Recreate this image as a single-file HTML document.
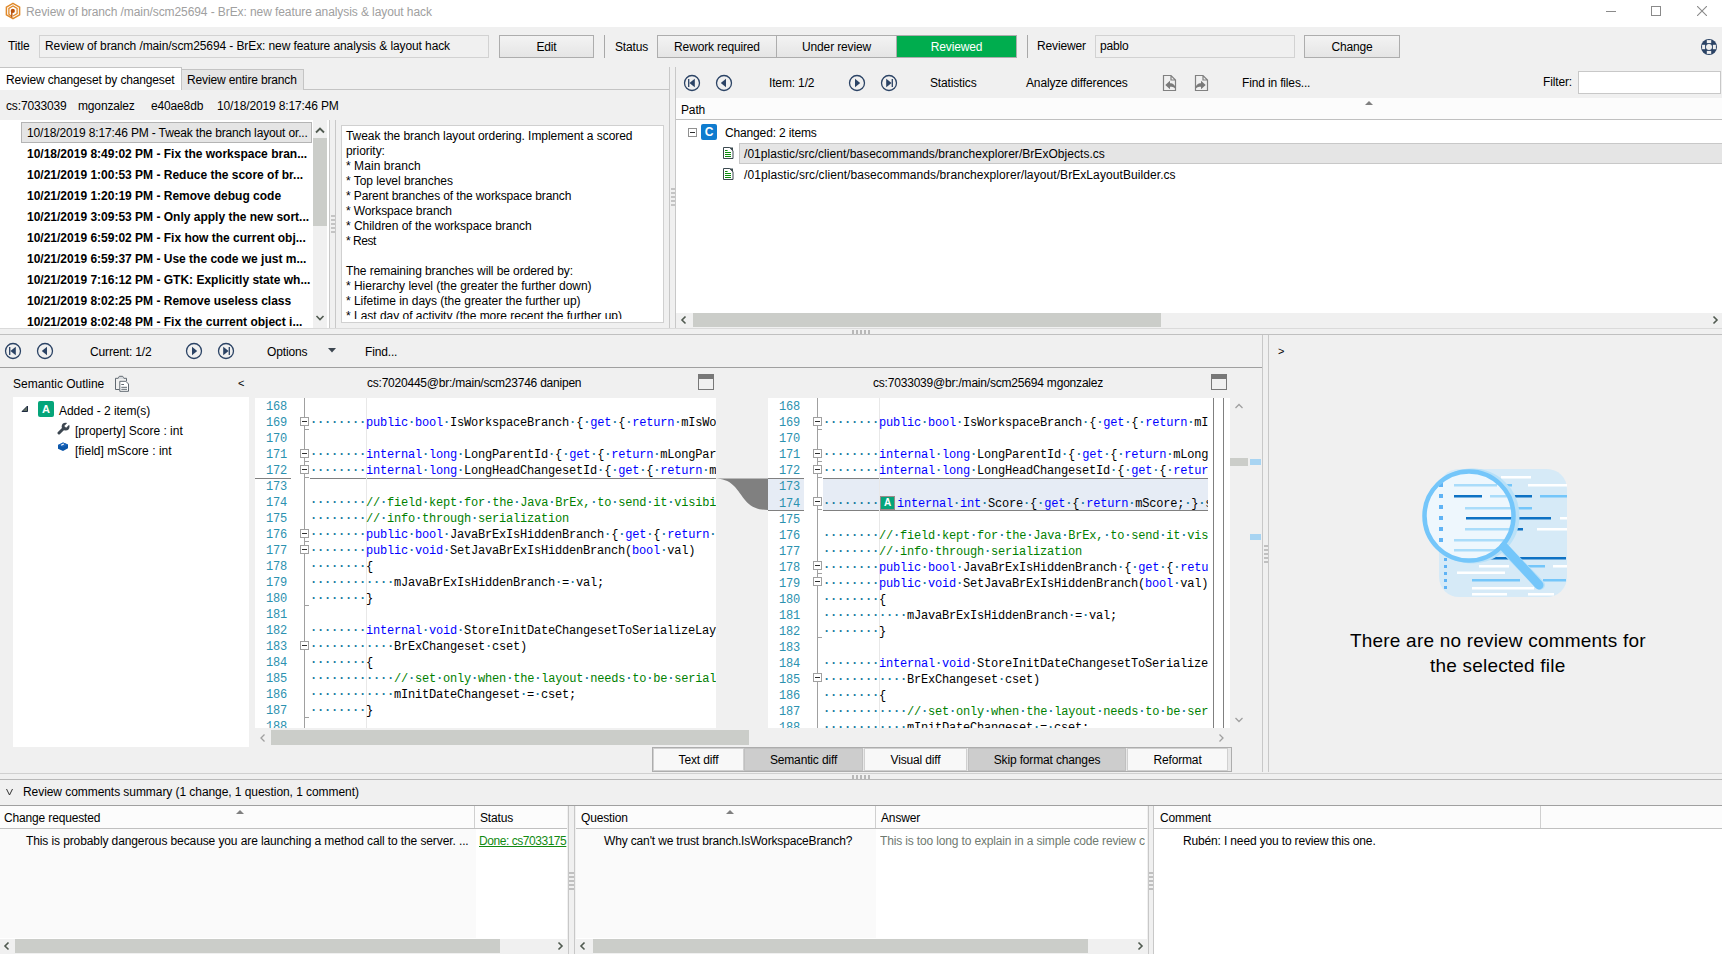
<!DOCTYPE html><html><head><meta charset="utf-8"><style>
*{box-sizing:border-box;margin:0;padding:0}
html,body{width:1722px;height:954px;overflow:hidden;background:#f0f0f0;font-family:"Liberation Sans",sans-serif;font-size:12px;color:#000}
.a{position:absolute}
.t{position:absolute;white-space:nowrap;line-height:14px;letter-spacing:-0.15px}
.btn{position:absolute;padding-top:1px;border:1px solid #adadad;background:linear-gradient(#f3f3f3,#e5e5e5);text-align:center;white-space:nowrap;letter-spacing:-0.15px}
.code{position:absolute;white-space:pre;font-family:"Liberation Mono",monospace;font-size:12px;letter-spacing:-0.2px;line-height:16px;color:#000}
.k{color:#0000ff}.c{color:#008000}.d{color:#17799f;font-weight:bold}
.ln{position:absolute;font-family:"Liberation Mono",monospace;font-size:12px;letter-spacing:-0.2px;line-height:16px;color:#2b91af;text-align:right;width:40px}
</style></head><body>
<div class="a" style="left:0px;top:0px;width:1722px;height:27px;background:#fff"></div>
<svg class="a" style="left:0;top:0" width="30" height="24" viewBox="0 0 30 24">
 <path d="M13 3.4 L19.6 7.2 L19.6 14.8 L13 18.6 L6.4 14.8 L6.4 7.2 Z" fill="none" stroke="#e0892a" stroke-width="1.5"/>
 <path d="M11.2 16.2 L8.9 14.2 L8.9 8.4 L13 6 L17.1 8.4 L17.1 13.6 L13 16" fill="none" stroke="#e0892a" stroke-width="1.3"/>
 <circle cx="12.8" cy="10.9" r="2.1" fill="#b8500a"/>
 <path d="M11.8 12 L11.8 17.5" stroke="#b8500a" stroke-width="1.4"/></svg>
<div class="t" style="left:26px;top:5px;color:#a0a0a0;letter-spacing:-0.086px">Review of branch /main/scm25694 - BrEx: new feature analysis &amp; layout hack</div>
<div class="a" style="left:1606px;top:11px;width:10px;height:1px;background:#8a8a8a"></div>
<div class="a" style="left:1651px;top:6px;width:10px;height:10px;border:1px solid #8a8a8a"></div>
<svg class="a" style="left:1697px;top:6px" width="10" height="10"><path d="M0 0 L10 10 M10 0 L0 10" stroke="#8a8a8a" stroke-width="1.1"/></svg>
<div class="t" style="left:8px;top:39px;">Title</div>
<div class="a" style="left:39px;top:35px;width:450px;height:23px;border:1px solid #d2d2d2;background:#f0f0f0"></div>
<div class="t" style="left:45px;top:39px;;letter-spacing:-0.097px">Review of branch /main/scm25694 - BrEx: new feature analysis &amp; layout hack</div>
<div class="btn" style="left:499px;top:35px;width:95px;height:23px;line-height:21px;">Edit</div>
<div class="a" style="left:604px;top:35px;width:1px;height:23px;background:#a8a8a8"></div>
<div class="t" style="left:615px;top:40px;">Status</div>
<div class="btn" style="left:657px;top:35px;width:120px;height:23px;line-height:21px;">Rework required</div>
<div class="btn" style="left:776px;top:35px;width:121px;height:23px;line-height:21px;">Under review</div>
<div class="btn" style="left:896px;top:35px;width:121px;height:23px;line-height:21px;background:#00ad4e;color:#fff">Reviewed</div>
<div class="a" style="left:1027px;top:35px;width:1px;height:23px;background:#a8a8a8"></div>
<div class="t" style="left:1037px;top:39px;">Reviewer</div>
<div class="a" style="left:1095px;top:35px;width:200px;height:23px;border:1px solid #d2d2d2;background:#f0f0f0"></div>
<div class="t" style="left:1100px;top:39px;">pablo</div>
<div class="btn" style="left:1304px;top:35px;width:96px;height:23px;line-height:21px;">Change</div>
<svg class="a" style="left:1701px;top:39px" width="16" height="16" viewBox="-8 -8 16 16">
 <circle r="8" fill="#2b4365"/><circle r="3" fill="#f0f0f0"/>
 <rect x="-2.2" y="-6.9" width="4.4" height="3" fill="#f0f0f0"/><rect x="-2.2" y="3.9" width="4.4" height="3" fill="#f0f0f0"/>
 <rect x="-6.9" y="-2.2" width="3" height="4.4" fill="#f0f0f0"/><rect x="3.9" y="-2.2" width="3" height="4.4" fill="#f0f0f0"/></svg>
<div class="a" style="left:0px;top:89px;width:669px;height:1px;background:#c4c4c4"></div>
<div class="a" style="left:-1px;top:67px;width:183px;height:23px;background:#fff;border:1px solid #c4c4c4;border-bottom:none"></div>
<div class="t" style="left:6px;top:73px;">Review changeset by changeset</div>
<div class="a" style="left:182px;top:69px;width:122px;height:21px;background:#e5e5e5;border:1px solid #c4c4c4;border-bottom:none;border-left:none"></div>
<div class="t" style="left:187px;top:73px;">Review entire branch</div>
<div class="t" style="left:6px;top:99px;">cs:7033039</div>
<div class="t" style="left:78px;top:99px;">mgonzalez</div>
<div class="t" style="left:151px;top:99px;">e40ae8db</div>
<div class="t" style="left:217px;top:99px;">10/18/2019 8:17:46 PM</div>
<div class="a" style="left:0px;top:120px;width:329px;height:208px;background:#fff"></div>
<div class="a" style="left:21px;top:122px;width:291px;height:21px;background:#e5e5e5;border:1px solid #b4b4b4"></div>
<div class="a" style="left:0;top:120px;width:313px;height:208px;overflow:hidden">
<div class="t" style="left:27px;top:6px;">10/18/2019 8:17:46 PM - Tweak the branch layout or...</div>
<div class="t" style="left:27px;top:27px;font-weight:bold;letter-spacing:0px;">10/18/2019 8:49:02 PM - Fix the workspace bran...</div>
<div class="t" style="left:27px;top:48px;font-weight:bold;letter-spacing:0px;">10/21/2019 1:00:53 PM - Reduce the score of br...</div>
<div class="t" style="left:27px;top:69px;font-weight:bold;letter-spacing:0px;">10/21/2019 1:20:19 PM - Remove debug code</div>
<div class="t" style="left:27px;top:90px;font-weight:bold;letter-spacing:0px;">10/21/2019 3:09:53 PM - Only apply the new sort...</div>
<div class="t" style="left:27px;top:111px;font-weight:bold;letter-spacing:0px;">10/21/2019 6:59:02 PM - Fix how the current obj...</div>
<div class="t" style="left:27px;top:132px;font-weight:bold;letter-spacing:0px;">10/21/2019 6:59:37 PM - Use the code we just m...</div>
<div class="t" style="left:27px;top:153px;font-weight:bold;letter-spacing:0px;">10/21/2019 7:16:12 PM - GTK: Explicitly state wh...</div>
<div class="t" style="left:27px;top:174px;font-weight:bold;letter-spacing:0px;">10/21/2019 8:02:25 PM - Remove useless class</div>
<div class="t" style="left:27px;top:195px;font-weight:bold;letter-spacing:0px;">10/21/2019 8:02:48 PM - Fix the current object i...</div>
</div>
<div class="a" style="left:313px;top:120px;width:14px;height:208px;background:#f0f0f0"></div>
<div class="a" style="left:313px;top:138px;width:14px;height:88px;background:#cbcdc9"></div>
<svg class="a" style="left:315px;top:126px" width="10" height="8"><path d="M1 6.5 L5 2.5 L9 6.5" fill="none" stroke="#505a50" stroke-width="1.8"/></svg>
<svg class="a" style="left:315px;top:314px" width="10" height="8"><path d="M1.5 2 L5 5.5 L8.5 2" fill="none" stroke="#505a50" stroke-width="1.6"/></svg>
<div class="a" style="left:329px;top:120px;width:1px;height:208px;background:#c8c8c8"></div>
<div class="a" style="left:335px;top:120px;width:1px;height:208px;background:#c8c8c8"></div>
<div class="a" style="left:331px;top:215px;width:4px;height:2px;background:#c4c4c4"></div>
<div class="a" style="left:331px;top:219px;width:4px;height:2px;background:#c4c4c4"></div>
<div class="a" style="left:331px;top:223px;width:4px;height:2px;background:#c4c4c4"></div>
<div class="a" style="left:331px;top:227px;width:4px;height:2px;background:#c4c4c4"></div>
<div class="a" style="left:331px;top:231px;width:4px;height:2px;background:#c4c4c4"></div>
<div class="a" style="left:341px;top:125px;width:323px;height:198px;background:#fff;border:1px solid #d0d0d0"></div>
<div class="a" style="left:342px;top:126px;width:321px;height:193px;overflow:hidden">
<div class="t" style="left:4px;top:3px;;letter-spacing:-0.059px">Tweak the branch layout ordering. Implement a scored</div>
<div class="t" style="left:4px;top:18px;letter-spacing:-0.05px">priority:</div>
<div class="t" style="left:4px;top:33px;;letter-spacing:0.059px">* Main branch</div>
<div class="t" style="left:4px;top:48px;letter-spacing:-0.05px">* Top level branches</div>
<div class="t" style="left:4px;top:63px;;letter-spacing:-0.118px">* Parent branches of the workspace branch</div>
<div class="t" style="left:4px;top:78px;;letter-spacing:-0.107px">* Workspace branch</div>
<div class="t" style="left:4px;top:93px;;letter-spacing:-0.031px">* Children of the workspace branch</div>
<div class="t" style="left:4px;top:108px;;letter-spacing:-0.480px">* Rest</div>
<div class="t" style="left:4px;top:123px;letter-spacing:-0.05px"></div>
<div class="t" style="left:4px;top:138px;;letter-spacing:-0.074px">The remaining branches will be ordered by:</div>
<div class="t" style="left:4px;top:153px;;letter-spacing:-0.025px">* Hierarchy level (the greater the further down)</div>
<div class="t" style="left:4px;top:168px;;letter-spacing:-0.020px">* Lifetime in days (the greater the further up)</div>
<div class="t" style="left:4px;top:183px;;letter-spacing:-0.015px">* Last day of activity (the more recent the further up)</div>
</div>
<div class="a" style="left:669px;top:67px;width:1px;height:261px;background:#c8c8c8"></div>
<div class="a" style="left:675px;top:67px;width:1px;height:261px;background:#c8c8c8"></div>
<div class="a" style="left:671px;top:188px;width:4px;height:2px;background:#c4c4c4"></div>
<div class="a" style="left:671px;top:192px;width:4px;height:2px;background:#c4c4c4"></div>
<div class="a" style="left:671px;top:196px;width:4px;height:2px;background:#c4c4c4"></div>
<div class="a" style="left:671px;top:200px;width:4px;height:2px;background:#c4c4c4"></div>
<div class="a" style="left:671px;top:204px;width:4px;height:2px;background:#c4c4c4"></div>
<svg class="a" style="left:683px;top:74px" width="18" height="18" viewBox="-9 -9 18 18"><circle r="7.5" fill="none" stroke="#2b4365" stroke-width="1.3"/><path d="M-3.3 -4 L-3.3 4" stroke="#2b4365" stroke-width="1.3"/><path d="M2.8 -4.2 L-2.6 0 L2.8 4.2 Z" fill="#2b4365"/></svg>
<svg class="a" style="left:715px;top:74px" width="18" height="18" viewBox="-9 -9 18 18"><circle r="7.5" fill="none" stroke="#2b4365" stroke-width="1.3"/><path d="M2 -4.2 L-3.2 0 L2 4.2 Z" fill="#2b4365"/></svg>
<div class="t" style="left:769px;top:76px;">Item: 1/2</div>
<svg class="a" style="left:848px;top:74px" width="18" height="18" viewBox="-9 -9 18 18"><circle r="7.5" fill="none" stroke="#2b4365" stroke-width="1.3"/><path d="M-2 -4.2 L3.2 0 L-2 4.2 Z" fill="#2b4365"/></svg>
<svg class="a" style="left:880px;top:74px" width="18" height="18" viewBox="-9 -9 18 18"><circle r="7.5" fill="none" stroke="#2b4365" stroke-width="1.3"/><path d="M3.3 -4 L3.3 4" stroke="#2b4365" stroke-width="1.3"/><path d="M-2.8 -4.2 L2.6 0 L-2.8 4.2 Z" fill="#2b4365"/></svg>
<div class="t" style="left:930px;top:76px;">Statistics</div>
<div class="t" style="left:1026px;top:76px;">Analyze differences</div>
<svg class="a" style="left:1162px;top:74px" width="16" height="18" viewBox="0 0 16 18">
<path d="M1.5 1.5 H9 L13.5 6 V16.5 H1.5 Z M9 1.5 V6 H13.5" fill="none" stroke="#808080" stroke-width="1.2"/>
<path d="M3.3 11 L8 6.8 V9.2 C11 9.2 13.6 11 13.6 15.2 C12.6 13.3 10.6 12.8 8 12.8 V15.2 Z" fill="#7a7a7a"/></svg>
<svg class="a" style="left:1194px;top:74px" width="16" height="18" viewBox="0 0 16 18">
<path d="M1.5 1.5 H9 L13.5 6 V16.5 H1.5 Z M9 1.5 V6 H13.5" fill="none" stroke="#808080" stroke-width="1.2"/>
<path d="M11.7 11 L7 6.8 V9.2 C4 9.2 1.4 11 1.4 15.2 C2.4 13.3 4.4 12.8 7 12.8 V15.2 Z" fill="#7a7a7a"/></svg>
<div class="t" style="left:1242px;top:76px;">Find in files...</div>
<div class="t" style="left:1543px;top:75px;">Filter:</div>
<div class="a" style="left:1578px;top:71px;width:143px;height:23px;background:#fff;border:1px solid #c8c8c8"></div>
<div class="a" style="left:676px;top:98px;width:1046px;height:230px;background:#fff"></div>
<div class="a" style="left:676px;top:98px;width:1046px;height:21px;background:#fcfcfc"></div>
<div class="a" style="left:676px;top:119px;width:1046px;height:1px;background:#c0c0c0"></div>
<div class="t" style="left:681px;top:103px;">Path</div>
<svg class="a" style="left:1364px;top:100px" width="10" height="6"><path d="M1 5 L5 1 L9 5 Z" fill="#808080"/></svg>
<div class="a" style="left:688px;top:128px;width:9px;height:9px;border:1px solid #909090;background:#fff"></div>
<div class="a" style="left:690px;top:132px;width:5px;height:1px;background:#303030"></div>
<div class="a" style="left:701px;top:124px;width:16px;height:16px;background:#0f7ccf;border-radius:2px"></div>
<div class="t" style="left:701px;top:125px;width:16px;text-align:center;color:#fff;font-weight:bold;font-size:12px;letter-spacing:0">C</div>
<div class="t" style="left:725px;top:126px;">Changed: 2 items</div>
<div class="a" style="left:739px;top:143px;width:990px;height:21px;background:#e5e5e5;border:1px solid #c8c8c8"></div>
<svg class="a" style="left:723px;top:147px" width="11" height="13" viewBox="0 0 11 13">
<path d="M0.5 0.5 H6.8 L10 3.7 V11.5 H0.5 Z" fill="#fff" stroke="#3c4a50" stroke-width="1"/>
<path d="M6.3 0.5 L10 4.2 V0.5 Z" fill="#3c4a50"/>
<path d="M2 3.5 H4.6 M2 5.5 H8 M2 7.5 H8 M2 9.5 H8" stroke="#0a8a0a" stroke-width="1"/></svg>
<svg class="a" style="left:723px;top:168px" width="11" height="13" viewBox="0 0 11 13">
<path d="M0.5 0.5 H6.8 L10 3.7 V11.5 H0.5 Z" fill="#fff" stroke="#3c4a50" stroke-width="1"/>
<path d="M6.3 0.5 L10 4.2 V0.5 Z" fill="#3c4a50"/>
<path d="M2 3.5 H4.6 M2 5.5 H8 M2 7.5 H8 M2 9.5 H8" stroke="#0a8a0a" stroke-width="1"/></svg>
<div class="t" style="left:744px;top:147px;;letter-spacing:0.043px">/01plastic/src/client/basecommands/branchexplorer/BrExObjects.cs</div>
<div class="t" style="left:744px;top:168px;;letter-spacing:0.080px">/01plastic/src/client/basecommands/branchexplorer/layout/BrExLayoutBuilder.cs</div>
<div class="a" style="left:676px;top:313px;width:1046px;height:15px;background:#f0f0f0"></div>
<div class="a" style="left:693px;top:313px;width:468px;height:14px;background:#cbcdc9"></div>
<svg class="a" style="left:679px;top:315px" width="10" height="10"><path d="M6.5 1.5 L3 5 L6.5 8.5" fill="none" stroke="#505a50" stroke-width="1.6"/></svg>
<svg class="a" style="left:1710px;top:315px" width="10" height="10"><path d="M3.5 1.5 L7 5 L3.5 8.5" fill="none" stroke="#505a50" stroke-width="1.6"/></svg>
<div class="a" style="left:0px;top:328px;width:1722px;height:1px;background:#dadada"></div>
<div class="a" style="left:0px;top:334px;width:1722px;height:1px;background:#c0c0c0"></div>
<div class="a" style="left:852px;top:330px;width:2px;height:4px;background:#b8b8b8"></div>
<div class="a" style="left:856px;top:330px;width:2px;height:4px;background:#b8b8b8"></div>
<div class="a" style="left:860px;top:330px;width:2px;height:4px;background:#b8b8b8"></div>
<div class="a" style="left:864px;top:330px;width:2px;height:4px;background:#b8b8b8"></div>
<div class="a" style="left:868px;top:330px;width:2px;height:4px;background:#b8b8b8"></div>
<svg class="a" style="left:4px;top:342px" width="18" height="18" viewBox="-9 -9 18 18"><circle r="7.5" fill="none" stroke="#2b4365" stroke-width="1.3"/><path d="M-3.3 -4 L-3.3 4" stroke="#2b4365" stroke-width="1.3"/><path d="M2.8 -4.2 L-2.6 0 L2.8 4.2 Z" fill="#2b4365"/></svg>
<svg class="a" style="left:36px;top:342px" width="18" height="18" viewBox="-9 -9 18 18"><circle r="7.5" fill="none" stroke="#2b4365" stroke-width="1.3"/><path d="M2 -4.2 L-3.2 0 L2 4.2 Z" fill="#2b4365"/></svg>
<div class="t" style="left:90px;top:345px;">Current: 1/2</div>
<svg class="a" style="left:185px;top:342px" width="18" height="18" viewBox="-9 -9 18 18"><circle r="7.5" fill="none" stroke="#2b4365" stroke-width="1.3"/><path d="M-2 -4.2 L3.2 0 L-2 4.2 Z" fill="#2b4365"/></svg>
<svg class="a" style="left:217px;top:342px" width="18" height="18" viewBox="-9 -9 18 18"><circle r="7.5" fill="none" stroke="#2b4365" stroke-width="1.3"/><path d="M3.3 -4 L3.3 4" stroke="#2b4365" stroke-width="1.3"/><path d="M-2.8 -4.2 L2.6 0 L-2.8 4.2 Z" fill="#2b4365"/></svg>
<div class="t" style="left:267px;top:345px;">Options</div>
<svg class="a" style="left:328px;top:348px" width="8" height="5"><path d="M0 0 H8 L4 4.5 Z" fill="#3c4650"/></svg>
<div class="t" style="left:365px;top:345px;">Find...</div>
<div class="a" style="left:0px;top:367px;width:1262px;height:1px;background:#a0a0a0"></div>
<div class="a" style="left:1262px;top:335px;width:1px;height:437px;background:#c8c8c8"></div>
<div class="a" style="left:1268px;top:335px;width:1px;height:437px;background:#c8c8c8"></div>
<div class="a" style="left:1264px;top:545px;width:4px;height:2px;background:#c0c0c0"></div>
<div class="a" style="left:1264px;top:549px;width:4px;height:2px;background:#c0c0c0"></div>
<div class="a" style="left:1264px;top:553px;width:4px;height:2px;background:#c0c0c0"></div>
<div class="a" style="left:1264px;top:557px;width:4px;height:2px;background:#c0c0c0"></div>
<div class="a" style="left:1264px;top:561px;width:4px;height:2px;background:#c0c0c0"></div>
<div class="t" style="left:13px;top:377px;;letter-spacing:-0.011px">Semantic Outline</div>
<svg class="a" style="left:108px;top:370px" width="28" height="26" viewBox="0 0 28 26">
<path d="M11.5 19.5 H7.5 V8.3 H10.3 L11.3 6.3 H14.7 L15.7 8.3 H18.5 V11.3" fill="none" stroke="#606870" stroke-width="1"/>
<path d="M10.5 8.8 H15.8 L15 7.3 H11.3 Z" fill="#d0d4d8"/>
<path d="M11.8 11.3 H17.8 L20.5 14 V21.3 H11.8 Z" fill="#fff" stroke="#606870" stroke-width="1"/>
<path d="M13.3 14.5 H16 M13.3 17.3 H19 M13.3 19.3 H19" stroke="#606870" stroke-width="1"/></svg>
<div class="t" style="left:238px;top:376px;font-size:11px">&lt;</div>
<div class="a" style="left:13px;top:397px;width:236px;height:350px;background:#fff"></div>
<svg class="a" style="left:21px;top:405px" width="8" height="8"><path d="M6.5 1 V6.5 H1 Z" fill="#5f6f60" stroke="#1e2a40" stroke-width="1" stroke-linejoin="round"/></svg>
<div class="a" style="left:38px;top:401px;width:16px;height:16px;background:#05a57a;border-radius:2px"></div>
<div class="t" style="left:38px;top:402px;width:16px;text-align:center;color:#fff;font-weight:bold;letter-spacing:0;font-size:11px">A</div>
<div class="t" style="left:59px;top:404px;;letter-spacing:-0.049px">Added - 2 item(s)</div>
<svg class="a" style="left:57px;top:422px" width="13" height="13" viewBox="0 0 13 13">
<path d="M2 11 L6.5 6.5" stroke="#3c4650" stroke-width="3" stroke-linecap="round"/>
<circle cx="8.6" cy="4.6" r="3.9" fill="#3c4650"/><path d="M8.2 4.8 L12 1" stroke="#fff" stroke-width="2.6"/></svg>
<div class="t" style="left:75px;top:424px;;letter-spacing:-0.016px">[property] Score : int</div>
<svg class="a" style="left:57px;top:441px" width="12" height="11" viewBox="0 0 12 11">
<path d="M1 4 L6 1.5 L11 3.5 V7.2 L6 10 L1 7.8 Z" fill="#0b55a8"/><path d="M1 4 L6 1.5 L11 3.5 L6 6 Z" fill="#1b66bd"/><path d="M4.2 4.2 L6.8 3" stroke="#fff" stroke-width="1.2"/></svg>
<div class="t" style="left:75px;top:444px;;letter-spacing:0.033px">[field] mScore : int</div>
<div class="t" style="left:367px;top:376px;;letter-spacing:-0.223px">cs:7020445@br:/main/scm23746 danipen</div>
<div class="t" style="left:873px;top:376px;;letter-spacing:-0.198px">cs:7033039@br:/main/scm25694 mgonzalez</div>
<div class="a" style="left:698px;top:374px;width:16px;height:16px;border:1px solid #787878;background:#f0f0f0"></div>
<div class="a" style="left:698px;top:374px;width:16px;height:5px;background:#787878"></div>
<div class="a" style="left:1211px;top:374px;width:16px;height:16px;border:1px solid #787878;background:#f0f0f0"></div>
<div class="a" style="left:1211px;top:374px;width:16px;height:5px;background:#787878"></div>
<div class="a" style="left:255px;top:398px;width:461px;height:330px;background:#fff;overflow:hidden">
<div class="a" style="left:0px;top:80px;width:36px;height:1px;background:#808080"></div>
<div class="a" style="left:55px;top:80px;width:461px;height:1px;background:#808080"></div>
<div class="a" style="left:111px;top:0px;width:1px;height:330px;background:#e8e8e8"></div>
<div class="a" style="left:49px;top:0px;width:1px;height:330px;background:#a0a0a0"></div>
<div class="ln" style="left:-8px;top:1px">168</div>
<div class="ln" style="left:-8px;top:17px">169</div>
<div class="a" style="left:45px;top:19px;width:9px;height:9px;border:1px solid #a0a0a0;background:#fff"></div>
<div class="a" style="left:47px;top:23px;width:5px;height:1px;background:#303030"></div>
<div class="a" style="left:50px;top:31px;width:4px;height:1px;background:#a0a0a0"></div>
<div class="code" style="left:55px;top:17px"><span class="d">········</span><span class="k">public</span><span class="d">·</span><span class="k">bool</span><span class="d">·</span>IsWorkspaceBranch<span class="d">·</span>{<span class="d">·</span><span class="k">get</span><span class="d">·</span>{<span class="d">·</span><span class="k">return</span><span class="d">·</span>mIsWorkspaceBranch;<span class="d">·</span>}<span class="d">·</span>}</div>
<div class="ln" style="left:-8px;top:33px">170</div>
<div class="ln" style="left:-8px;top:49px">171</div>
<div class="a" style="left:45px;top:51px;width:9px;height:9px;border:1px solid #a0a0a0;background:#fff"></div>
<div class="a" style="left:47px;top:55px;width:5px;height:1px;background:#303030"></div>
<div class="a" style="left:50px;top:63px;width:4px;height:1px;background:#a0a0a0"></div>
<div class="code" style="left:55px;top:49px"><span class="d">········</span><span class="k">internal</span><span class="d">·</span><span class="k">long</span><span class="d">·</span>LongParentId<span class="d">·</span>{<span class="d">·</span><span class="k">get</span><span class="d">·</span>{<span class="d">·</span><span class="k">return</span><span class="d">·</span>mLongParentId;<span class="d">·</span>}<span class="d">·</span>}</div>
<div class="ln" style="left:-8px;top:65px">172</div>
<div class="a" style="left:45px;top:67px;width:9px;height:9px;border:1px solid #a0a0a0;background:#fff"></div>
<div class="a" style="left:47px;top:71px;width:5px;height:1px;background:#303030"></div>
<div class="a" style="left:50px;top:79px;width:4px;height:1px;background:#a0a0a0"></div>
<div class="code" style="left:55px;top:65px"><span class="d">········</span><span class="k">internal</span><span class="d">·</span><span class="k">long</span><span class="d">·</span>LongHeadChangesetId<span class="d">·</span>{<span class="d">·</span><span class="k">get</span><span class="d">·</span>{<span class="d">·</span><span class="k">return</span><span class="d">·</span>mLongHead;<span class="d">·</span>}<span class="d">·</span>}</div>
<div class="ln" style="left:-8px;top:81px">173</div>
<div class="ln" style="left:-8px;top:97px">174</div>
<div class="code" style="left:55px;top:97px"><span class="d">········</span><span class="c">//</span><span class="d">·</span><span class="c">field</span><span class="d">·</span><span class="c">kept</span><span class="d">·</span><span class="c">for</span><span class="d">·</span><span class="c">the</span><span class="d">·</span><span class="c">Java</span><span class="d">·</span><span class="c">BrEx,</span><span class="d">·</span><span class="c">to</span><span class="d">·</span><span class="c">send</span><span class="d">·</span><span class="c">it</span><span class="d">·</span><span class="c">visibility</span></div>
<div class="ln" style="left:-8px;top:113px">175</div>
<div class="code" style="left:55px;top:113px"><span class="d">········</span><span class="c">//</span><span class="d">·</span><span class="c">info</span><span class="d">·</span><span class="c">through</span><span class="d">·</span><span class="c">serialization</span></div>
<div class="ln" style="left:-8px;top:129px">176</div>
<div class="a" style="left:45px;top:131px;width:9px;height:9px;border:1px solid #a0a0a0;background:#fff"></div>
<div class="a" style="left:47px;top:135px;width:5px;height:1px;background:#303030"></div>
<div class="a" style="left:50px;top:143px;width:4px;height:1px;background:#a0a0a0"></div>
<div class="code" style="left:55px;top:129px"><span class="d">········</span><span class="k">public</span><span class="d">·</span><span class="k">bool</span><span class="d">·</span>JavaBrExIsHiddenBranch<span class="d">·</span>{<span class="d">·</span><span class="k">get</span><span class="d">·</span>{<span class="d">·</span><span class="k">return</span><span class="d">·</span>mJava;<span class="d">·</span>}<span class="d">·</span>}</div>
<div class="ln" style="left:-8px;top:145px">177</div>
<div class="a" style="left:45px;top:147px;width:9px;height:9px;border:1px solid #a0a0a0;background:#fff"></div>
<div class="a" style="left:47px;top:151px;width:5px;height:1px;background:#303030"></div>
<div class="code" style="left:55px;top:145px"><span class="d">········</span><span class="k">public</span><span class="d">·</span><span class="k">void</span><span class="d">·</span>SetJavaBrExIsHiddenBranch(<span class="k">bool</span><span class="d">·</span>val)</div>
<div class="ln" style="left:-8px;top:161px">178</div>
<div class="code" style="left:55px;top:161px"><span class="d">········</span>{</div>
<div class="ln" style="left:-8px;top:177px">179</div>
<div class="code" style="left:55px;top:177px"><span class="d">············</span>mJavaBrExIsHiddenBranch<span class="d">·</span>=<span class="d">·</span>val;</div>
<div class="ln" style="left:-8px;top:193px">180</div>
<div class="a" style="left:50px;top:207px;width:4px;height:1px;background:#a0a0a0"></div>
<div class="code" style="left:55px;top:193px"><span class="d">········</span>}</div>
<div class="ln" style="left:-8px;top:209px">181</div>
<div class="ln" style="left:-8px;top:225px">182</div>
<div class="code" style="left:55px;top:225px"><span class="d">········</span><span class="k">internal</span><span class="d">·</span><span class="k">void</span><span class="d">·</span>StoreInitDateChangesetToSerializeLayout(</div>
<div class="ln" style="left:-8px;top:241px">183</div>
<div class="a" style="left:45px;top:243px;width:9px;height:9px;border:1px solid #a0a0a0;background:#fff"></div>
<div class="a" style="left:47px;top:247px;width:5px;height:1px;background:#303030"></div>
<div class="code" style="left:55px;top:241px"><span class="d">············</span>BrExChangeset<span class="d">·</span>cset)</div>
<div class="ln" style="left:-8px;top:257px">184</div>
<div class="code" style="left:55px;top:257px"><span class="d">········</span>{</div>
<div class="ln" style="left:-8px;top:273px">185</div>
<div class="code" style="left:55px;top:273px"><span class="d">············</span><span class="c">//</span><span class="d">·</span><span class="c">set</span><span class="d">·</span><span class="c">only</span><span class="d">·</span><span class="c">when</span><span class="d">·</span><span class="c">the</span><span class="d">·</span><span class="c">layout</span><span class="d">·</span><span class="c">needs</span><span class="d">·</span><span class="c">to</span><span class="d">·</span><span class="c">be</span><span class="d">·</span><span class="c">serialized</span></div>
<div class="ln" style="left:-8px;top:289px">186</div>
<div class="code" style="left:55px;top:289px"><span class="d">············</span>mInitDateChangeset<span class="d">·</span>=<span class="d">·</span>cset;</div>
<div class="ln" style="left:-8px;top:305px">187</div>
<div class="a" style="left:50px;top:319px;width:4px;height:1px;background:#a0a0a0"></div>
<div class="code" style="left:55px;top:305px"><span class="d">········</span>}</div>
<div class="ln" style="left:-8px;top:321px">188</div>
</div>
<div class="a" style="left:768px;top:398px;width:440px;height:330px;background:#fff;overflow:hidden">
<div class="a" style="left:0px;top:80px;width:36px;height:32px;background:#e6ecf5"></div>
<div class="a" style="left:55px;top:80px;width:385px;height:32px;background:#e6ecf5"></div>
<div class="a" style="left:0px;top:80px;width:36px;height:1px;background:#808080"></div>
<div class="a" style="left:55px;top:80px;width:440px;height:1px;background:#808080"></div>
<div class="a" style="left:0px;top:112px;width:36px;height:1px;background:#808080"></div>
<div class="a" style="left:55px;top:112px;width:440px;height:1px;background:#808080"></div>
<div class="a" style="left:111px;top:0px;width:1px;height:330px;background:#e8e8e8"></div>
<div class="a" style="left:49px;top:0px;width:1px;height:330px;background:#a0a0a0"></div>
<div class="ln" style="left:-8px;top:1px">168</div>
<div class="ln" style="left:-8px;top:17px">169</div>
<div class="a" style="left:45px;top:19px;width:9px;height:9px;border:1px solid #a0a0a0;background:#fff"></div>
<div class="a" style="left:47px;top:23px;width:5px;height:1px;background:#303030"></div>
<div class="a" style="left:50px;top:31px;width:4px;height:1px;background:#a0a0a0"></div>
<div class="code" style="left:55px;top:17px"><span class="d">········</span><span class="k">public</span><span class="d">·</span><span class="k">bool</span><span class="d">·</span>IsWorkspaceBranch<span class="d">·</span>{<span class="d">·</span><span class="k">get</span><span class="d">·</span>{<span class="d">·</span><span class="k">return</span><span class="d">·</span>mIsWorkspaceBranch;<span class="d">·</span>}<span class="d">·</span>}</div>
<div class="ln" style="left:-8px;top:33px">170</div>
<div class="ln" style="left:-8px;top:49px">171</div>
<div class="a" style="left:45px;top:51px;width:9px;height:9px;border:1px solid #a0a0a0;background:#fff"></div>
<div class="a" style="left:47px;top:55px;width:5px;height:1px;background:#303030"></div>
<div class="a" style="left:50px;top:63px;width:4px;height:1px;background:#a0a0a0"></div>
<div class="code" style="left:55px;top:49px"><span class="d">········</span><span class="k">internal</span><span class="d">·</span><span class="k">long</span><span class="d">·</span>LongParentId<span class="d">·</span>{<span class="d">·</span><span class="k">get</span><span class="d">·</span>{<span class="d">·</span><span class="k">return</span><span class="d">·</span>mLongParentId;<span class="d">·</span>}<span class="d">·</span>}</div>
<div class="ln" style="left:-8px;top:65px">172</div>
<div class="a" style="left:45px;top:67px;width:9px;height:9px;border:1px solid #a0a0a0;background:#fff"></div>
<div class="a" style="left:47px;top:71px;width:5px;height:1px;background:#303030"></div>
<div class="a" style="left:50px;top:79px;width:4px;height:1px;background:#a0a0a0"></div>
<div class="code" style="left:55px;top:65px"><span class="d">········</span><span class="k">internal</span><span class="d">·</span><span class="k">long</span><span class="d">·</span>LongHeadChangesetId<span class="d">·</span>{<span class="d">·</span><span class="k">get</span><span class="d">·</span>{<span class="d">·</span><span class="k">return</span><span class="d">·</span>mLongHead;<span class="d">·</span>}<span class="d">·</span>}</div>
<div class="ln" style="left:-8px;top:81px">173</div>
<div class="ln" style="left:-8px;top:98px">174</div>
<div class="a" style="left:45px;top:99px;width:9px;height:9px;border:1px solid #a0a0a0;background:#fff"></div>
<div class="a" style="left:47px;top:103px;width:5px;height:1px;background:#303030"></div>
<div class="a" style="left:50px;top:111px;width:4px;height:1px;background:#a0a0a0"></div>
<div class="code" style="left:55px;top:98px"><span class="d">········</span></div>
<div class="a" style="left:112px;top:98px;width:15px;height:14px;background:#05a57a;border:1px solid #9a8a8a"></div>
<div class="t" style="left:112px;top:98px;width:15px;text-align:center;color:#fff;font-weight:bold;font-size:10px;line-height:14px;letter-spacing:0">A</div>
<div class="code" style="left:129px;top:98px"><span class="k">internal</span><span class="d">·</span><span class="k">int</span><span class="d">·</span>Score<span class="d">·</span>{<span class="d">·</span><span class="k">get</span><span class="d">·</span>{<span class="d">·</span><span class="k">return</span><span class="d">·</span>mScore;<span class="d">·</span>}<span class="d">·</span>set;<span class="d">·</span>}</div>
<div class="ln" style="left:-8px;top:114px">175</div>
<div class="ln" style="left:-8px;top:130px">176</div>
<div class="code" style="left:55px;top:130px"><span class="d">········</span><span class="c">//</span><span class="d">·</span><span class="c">field</span><span class="d">·</span><span class="c">kept</span><span class="d">·</span><span class="c">for</span><span class="d">·</span><span class="c">the</span><span class="d">·</span><span class="c">Java</span><span class="d">·</span><span class="c">BrEx,</span><span class="d">·</span><span class="c">to</span><span class="d">·</span><span class="c">send</span><span class="d">·</span><span class="c">it</span><span class="d">·</span><span class="c">visibility</span></div>
<div class="ln" style="left:-8px;top:146px">177</div>
<div class="code" style="left:55px;top:146px"><span class="d">········</span><span class="c">//</span><span class="d">·</span><span class="c">info</span><span class="d">·</span><span class="c">through</span><span class="d">·</span><span class="c">serialization</span></div>
<div class="ln" style="left:-8px;top:162px">178</div>
<div class="a" style="left:45px;top:163px;width:9px;height:9px;border:1px solid #a0a0a0;background:#fff"></div>
<div class="a" style="left:47px;top:167px;width:5px;height:1px;background:#303030"></div>
<div class="a" style="left:50px;top:175px;width:4px;height:1px;background:#a0a0a0"></div>
<div class="code" style="left:55px;top:162px"><span class="d">········</span><span class="k">public</span><span class="d">·</span><span class="k">bool</span><span class="d">·</span>JavaBrExIsHiddenBranch<span class="d">·</span>{<span class="d">·</span><span class="k">get</span><span class="d">·</span>{<span class="d">·</span><span class="k">return</span><span class="d">·</span>mJava;<span class="d">·</span>}<span class="d">·</span>}</div>
<div class="ln" style="left:-8px;top:178px">179</div>
<div class="a" style="left:45px;top:179px;width:9px;height:9px;border:1px solid #a0a0a0;background:#fff"></div>
<div class="a" style="left:47px;top:183px;width:5px;height:1px;background:#303030"></div>
<div class="code" style="left:55px;top:178px"><span class="d">········</span><span class="k">public</span><span class="d">·</span><span class="k">void</span><span class="d">·</span>SetJavaBrExIsHiddenBranch(<span class="k">bool</span><span class="d">·</span>val)</div>
<div class="ln" style="left:-8px;top:194px">180</div>
<div class="code" style="left:55px;top:194px"><span class="d">········</span>{</div>
<div class="ln" style="left:-8px;top:210px">181</div>
<div class="code" style="left:55px;top:210px"><span class="d">············</span>mJavaBrExIsHiddenBranch<span class="d">·</span>=<span class="d">·</span>val;</div>
<div class="ln" style="left:-8px;top:226px">182</div>
<div class="a" style="left:50px;top:239px;width:4px;height:1px;background:#a0a0a0"></div>
<div class="code" style="left:55px;top:226px"><span class="d">········</span>}</div>
<div class="ln" style="left:-8px;top:242px">183</div>
<div class="ln" style="left:-8px;top:258px">184</div>
<div class="code" style="left:55px;top:258px"><span class="d">········</span><span class="k">internal</span><span class="d">·</span><span class="k">void</span><span class="d">·</span>StoreInitDateChangesetToSerializeLayout(</div>
<div class="ln" style="left:-8px;top:274px">185</div>
<div class="a" style="left:45px;top:275px;width:9px;height:9px;border:1px solid #a0a0a0;background:#fff"></div>
<div class="a" style="left:47px;top:279px;width:5px;height:1px;background:#303030"></div>
<div class="code" style="left:55px;top:274px"><span class="d">············</span>BrExChangeset<span class="d">·</span>cset)</div>
<div class="ln" style="left:-8px;top:290px">186</div>
<div class="code" style="left:55px;top:290px"><span class="d">········</span>{</div>
<div class="ln" style="left:-8px;top:306px">187</div>
<div class="code" style="left:55px;top:306px"><span class="d">············</span><span class="c">//</span><span class="d">·</span><span class="c">set</span><span class="d">·</span><span class="c">only</span><span class="d">·</span><span class="c">when</span><span class="d">·</span><span class="c">the</span><span class="d">·</span><span class="c">layout</span><span class="d">·</span><span class="c">needs</span><span class="d">·</span><span class="c">to</span><span class="d">·</span><span class="c">be</span><span class="d">·</span><span class="c">serialized</span></div>
<div class="ln" style="left:-8px;top:322px">188</div>
<div class="code" style="left:55px;top:322px"><span class="d">············</span>mInitDateChangeset<span class="d">·</span>=<span class="d">·</span>cset;</div>
</div>
<div class="a" style="left:1213px;top:398px;width:1px;height:330px;background:#808080"></div>
<div class="a" style="left:1208px;top:398px;width:5px;height:330px;background:#fff"></div>
<div class="a" style="left:1214px;top:398px;width:9px;height:330px;background:#fff"></div>
<div class="a" style="left:1223px;top:398px;width:1px;height:330px;background:#808080"></div>
<div class="a" style="left:1224px;top:398px;width:6px;height:330px;background:#fff"></div>
<svg class="a" style="left:716px;top:478px" width="52" height="33"><path d="M0 0.5 H52 V32 C30 32 28 18 18 8 C12 2 6 1 0 0.5 Z" fill="#808080"/></svg>
<svg class="a" style="left:1234px;top:402px" width="10" height="8"><path d="M1.5 6 L5 2.5 L8.5 6" fill="none" stroke="#a0a0a0" stroke-width="1.3"/></svg>
<svg class="a" style="left:1234px;top:716px" width="10" height="8"><path d="M1.5 2 L5 5.5 L8.5 2" fill="none" stroke="#a0a0a0" stroke-width="1.3"/></svg>
<div class="a" style="left:1230px;top:458px;width:18px;height:8px;background:#cbcdc9"></div>
<div class="a" style="left:1250px;top:459px;width:11px;height:6px;background:#a8d4f2"></div>
<div class="a" style="left:1250px;top:534px;width:11px;height:6px;background:#a8d4f2"></div>
<div class="a" style="left:256px;top:730px;width:972px;height:16px;background:#f0f0f0"></div>
<div class="a" style="left:271px;top:730px;width:478px;height:15px;background:#cbcdc9"></div>
<svg class="a" style="left:258px;top:733px" width="10" height="10"><path d="M6.5 1.5 L3 5 L6.5 8.5" fill="none" stroke="#a0a0a0" stroke-width="1.3"/></svg>
<svg class="a" style="left:1216px;top:733px" width="10" height="10"><path d="M3.5 1.5 L7 5 L3.5 8.5" fill="none" stroke="#a0a0a0" stroke-width="1.3"/></svg>
<div class="a" style="left:652px;top:747px;width:580px;height:25px;border:1px solid #adadad;background:#e8e8e8"></div>
<div class="btn" style="left:653px;top:748px;width:91px;height:23px;line-height:21px;background:#f8f8f8;border-color:#d0d0d0">Text diff</div>
<div class="btn" style="left:744px;top:748px;width:119px;height:23px;line-height:21px;background:#cdcdcd;border-color:#c0c0c0">Semantic diff</div>
<div class="btn" style="left:864px;top:748px;width:103px;height:23px;line-height:21px;background:#f8f8f8;border-color:#d0d0d0">Visual diff</div>
<div class="btn" style="left:968px;top:748px;width:158px;height:23px;line-height:21px;background:#cdcdcd;border-color:#c0c0c0">Skip format changes</div>
<div class="btn" style="left:1127px;top:748px;width:101px;height:23px;line-height:21px;background:#f8f8f8;border-color:#d0d0d0">Reformat</div>
<div class="t" style="left:1278px;top:344px;font-size:11px">&gt;</div>
<svg class="a" style="left:1420px;top:466px" width="150" height="135" viewBox="0 0 150 135">
<rect x="19" y="3" width="128" height="128" rx="20" fill="#d6eaf7"/>
<g fill="#fff"><rect x="81" y="10" width="30" height="2.5"/><rect x="108" y="18" width="39" height="2.5"/><rect x="140" y="51" width="7" height="2.5"/>
<rect x="117" y="62" width="30" height="2.5"/><rect x="59" y="99" width="30" height="2.5"/><rect x="133" y="99" width="14" height="2.5"/>
<rect x="37" y="105.5" width="48" height="2.5"/><rect x="52" y="121" width="62" height="2.5"/><rect x="52" y="127" width="35" height="2.5"/><rect x="108" y="127" width="26" height="2.5"/></g>
<g fill="#0e72c4"><rect x="91" y="29" width="21" height="2.5"/><rect x="96" y="51" width="35" height="2.5"/><rect x="91" y="62" width="12" height="2.5"/><rect x="70" y="91" width="76" height="2.5"/></g>
<g fill="#74c6fa"><rect x="77" y="18" width="15" height="2.5"/><rect x="120" y="29" width="27" height="2.5"/><rect x="96" y="41" width="16" height="2.5"/><rect x="106" y="99" width="19" height="2.5"/><rect x="52" y="113" width="48" height="2.5"/><rect x="123" y="113" width="23" height="2.5"/></g>
<g fill="#5fb3f5"><rect x="24" y="92" width="3" height="3"/><rect x="24" y="99" width="3" height="3"/><rect x="24" y="106" width="3" height="3"/><rect x="24" y="113" width="3" height="3"/><rect x="24" y="120" width="3" height="3"/></g>
<circle cx="52" cy="50" r="45" fill="none" stroke="#b9e1f8" stroke-width="5"/>
<circle cx="49" cy="50" r="44" fill="#eef7fd"/>
<g fill="#a9dcfa"><rect x="34" y="18" width="43" height="2.5"/><rect x="70" y="29" width="17" height="2.5"/><rect x="45" y="41" width="47" height="2.5"/><rect x="45" y="62" width="46" height="2.5"/><rect x="34" y="73" width="53" height="2.5"/><rect x="34" y="83" width="43" height="2.5"/></g>
<g fill="#0e72c4"><rect x="34" y="29" width="28" height="2.5"/><rect x="46" y="51" width="46" height="2.5"/></g>
<g fill="#5fb3f5"><rect x="19" y="17" width="4" height="4"/><rect x="19" y="28" width="4" height="4"/><rect x="19" y="39" width="4" height="4"/><rect x="19" y="50" width="4" height="4"/><rect x="19" y="61" width="4" height="4"/><rect x="19" y="72" width="4" height="4"/></g>
<path d="M86 84 L120 119" stroke="#b9e1f8" stroke-width="10" stroke-linecap="round"/>
<path d="M84 81 L119 119" stroke="#74c6fa" stroke-width="9" stroke-linecap="round"/>
<circle cx="49" cy="50" r="44.5" fill="none" stroke="#74c6fa" stroke-width="4.5"/>
</svg>
<div class="t" style="left:1350px;top:630px;font-size:19px;line-height:22px;letter-spacing:0.2px;color:#000">There are no review comments for</div>
<div class="t" style="left:1430px;top:655px;font-size:19px;line-height:22px;letter-spacing:0.2px;color:#000">the selected file</div>
<div class="a" style="left:0px;top:773px;width:1722px;height:1px;background:#d0d0d0"></div>
<div class="a" style="left:0px;top:779px;width:1722px;height:1px;background:#b8b8b8"></div>
<div class="a" style="left:852px;top:775px;width:2px;height:4px;background:#b8b8b8"></div>
<div class="a" style="left:856px;top:775px;width:2px;height:4px;background:#b8b8b8"></div>
<div class="a" style="left:860px;top:775px;width:2px;height:4px;background:#b8b8b8"></div>
<div class="a" style="left:864px;top:775px;width:2px;height:4px;background:#b8b8b8"></div>
<div class="a" style="left:868px;top:775px;width:2px;height:4px;background:#b8b8b8"></div>
<svg class="a" style="left:6px;top:788px" width="8" height="8"><path d="M0.5 1 L3.5 7 L6.5 1" fill="none" stroke="#303030" stroke-width="1"/></svg>
<div class="t" style="left:23px;top:785px;;letter-spacing:-0.063px">Review comments summary (1 change, 1 question, 1 comment)</div>
<div class="a" style="left:0px;top:805px;width:1722px;height:1px;background:#a0a0a0"></div>
<div class="a" style="left:0px;top:806px;width:567px;height:148px;background:#fff"></div>
<div class="a" style="left:0px;top:806px;width:567px;height:22px;background:#fcfcfc"></div>
<div class="a" style="left:0px;top:828px;width:567px;height:1px;background:#c0c0c0"></div>
<div class="t" style="left:4px;top:811px;">Change requested</div>
<div class="a" style="left:474px;top:806px;width:1px;height:22px;background:#d0d0d0"></div>
<div class="t" style="left:480px;top:811px;">Status</div>
<div class="a" style="left:0px;top:829px;width:476px;height:109px;background:#fafafa"></div>
<div class="t" style="left:26px;top:834px;;letter-spacing:-0.106px">This is probably dangerous because you are launching a method call to the server. ...</div>
<div class="t" style="left:479px;top:834px;color:#118a11;text-decoration:underline;letter-spacing:-0.45px">Done: cs7033175</div>
<svg class="a" style="left:235px;top:809px" width="10" height="6"><path d="M1 5 L5 1 L9 5 Z" fill="#808080"/></svg>
<div class="a" style="left:568px;top:806px;width:1px;height:148px;background:#c8c8c8"></div>
<div class="a" style="left:574px;top:806px;width:1px;height:148px;background:#c8c8c8"></div>
<div class="a" style="left:569px;top:872px;width:5px;height:2px;background:#c0c0c0"></div>
<div class="a" style="left:569px;top:876px;width:5px;height:2px;background:#c0c0c0"></div>
<div class="a" style="left:569px;top:880px;width:5px;height:2px;background:#c0c0c0"></div>
<div class="a" style="left:569px;top:884px;width:5px;height:2px;background:#c0c0c0"></div>
<div class="a" style="left:569px;top:888px;width:5px;height:2px;background:#c0c0c0"></div>
<div class="a" style="left:576px;top:806px;width:571px;height:148px;background:#fff"></div>
<div class="a" style="left:576px;top:806px;width:571px;height:22px;background:#fcfcfc"></div>
<div class="a" style="left:576px;top:828px;width:571px;height:1px;background:#c0c0c0"></div>
<div class="t" style="left:581px;top:811px;">Question</div>
<div class="a" style="left:875px;top:806px;width:1px;height:22px;background:#d0d0d0"></div>
<div class="t" style="left:881px;top:811px;">Answer</div>
<div class="a" style="left:576px;top:829px;width:300px;height:109px;background:#fafafa"></div>
<div class="t" style="left:604px;top:834px;">Why can&#x27;t we trust branch.IsWorkspaceBranch?</div>
<div class="a" style="left:880px;top:829px;width:265px;height:20px;overflow:hidden">
<div class="t" style="left:0px;top:5px;color:#707a70">This is too long to explain in a simple code review comment</div>
</div>
<svg class="a" style="left:725px;top:809px" width="10" height="6"><path d="M1 5 L5 1 L9 5 Z" fill="#808080"/></svg>
<div class="a" style="left:1148px;top:806px;width:1px;height:148px;background:#c8c8c8"></div>
<div class="a" style="left:1153px;top:806px;width:1px;height:148px;background:#c8c8c8"></div>
<div class="a" style="left:1149px;top:872px;width:4px;height:2px;background:#c0c0c0"></div>
<div class="a" style="left:1149px;top:876px;width:4px;height:2px;background:#c0c0c0"></div>
<div class="a" style="left:1149px;top:880px;width:4px;height:2px;background:#c0c0c0"></div>
<div class="a" style="left:1149px;top:884px;width:4px;height:2px;background:#c0c0c0"></div>
<div class="a" style="left:1149px;top:888px;width:4px;height:2px;background:#c0c0c0"></div>
<div class="a" style="left:1154px;top:806px;width:568px;height:148px;background:#fff"></div>
<div class="a" style="left:1154px;top:806px;width:568px;height:22px;background:#fcfcfc"></div>
<div class="a" style="left:1154px;top:828px;width:568px;height:1px;background:#c0c0c0"></div>
<div class="t" style="left:1160px;top:811px;">Comment</div>
<div class="a" style="left:1540px;top:806px;width:1px;height:22px;background:#d0d0d0"></div>
<div class="t" style="left:1183px;top:834px;">Rubén: I need you to review this one.</div>
<div class="a" style="left:0px;top:939px;width:567px;height:15px;background:#f0f0f0"></div>
<div class="a" style="left:15px;top:939px;width:485px;height:14px;background:#cbcdc9"></div>
<svg class="a" style="left:2px;top:941px" width="10" height="10"><path d="M6.5 1.5 L3 5 L6.5 8.5" fill="none" stroke="#505a50" stroke-width="1.6"/></svg>
<svg class="a" style="left:555px;top:941px" width="10" height="10"><path d="M3.5 1.5 L7 5 L3.5 8.5" fill="none" stroke="#505a50" stroke-width="1.6"/></svg>
<div class="a" style="left:576px;top:939px;width:571px;height:15px;background:#f0f0f0"></div>
<div class="a" style="left:593px;top:939px;width:495px;height:14px;background:#cbcdc9"></div>
<svg class="a" style="left:578px;top:941px" width="10" height="10"><path d="M6.5 1.5 L3 5 L6.5 8.5" fill="none" stroke="#505a50" stroke-width="1.6"/></svg>
<svg class="a" style="left:1135px;top:941px" width="10" height="10"><path d="M3.5 1.5 L7 5 L3.5 8.5" fill="none" stroke="#505a50" stroke-width="1.6"/></svg>
</body></html>
